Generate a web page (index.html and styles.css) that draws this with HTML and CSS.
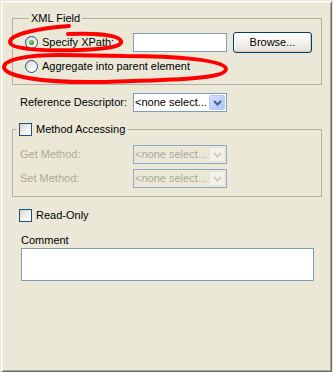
FILE: index.html
```html
<!DOCTYPE html>
<html>
<head>
<meta charset="utf-8">
<link rel="stylesheet" href="styles.css">
</head>
<body>
<div class="panel">
  <fieldset class="group xml">
    <legend>XML Field</legend>
    <div class="xrow">
      <label class="opt"><span class="radio on"></span>Specify XPath:</label>
      <span class="text"></span>
      <span class="btn">Browse...</span>
    </div>
    <div class="xrow2">
      <label class="opt"><span class="radio"></span>Aggregate into parent element</label>
    </div>
  </fieldset>
  <div class="frow ref">
    <span class="lbl">Reference Descriptor:</span>
    <span class="combo"><span class="val">&lt;none select...</span><span class="arrow"><svg width="9" height="6" viewBox="0 0 9 6"><path d="M1 1 L4.5 4.5 L8 1" fill="none" stroke="#4d6185" stroke-width="2"/></svg></span></span>
  </div>
  <fieldset class="group method">
    <legend><span class="check"></span>Method Accessing</legend>
    <div class="frow dis">
      <span class="lbl">Get Method:</span>
      <span class="combo"><span class="val">&lt;none select...</span><span class="arrow"><svg width="9" height="6" viewBox="0 0 9 6"><path d="M1 1 L4.5 4.5 L8 1" fill="none" stroke="#cfcdc2" stroke-width="2"/></svg></span></span>
    </div>
    <div class="frow dis second">
      <span class="lbl">Set Method:</span>
      <span class="combo"><span class="val">&lt;none select...</span><span class="arrow"><svg width="9" height="6" viewBox="0 0 9 6"><path d="M1 1 L4.5 4.5 L8 1" fill="none" stroke="#cfcdc2" stroke-width="2"/></svg></span></span>
    </div>
  </fieldset>
  <label class="opt ro"><span class="check"></span>Read-Only</label>
  <div class="cmt-lbl">Comment</div>
  <div class="cmt"></div>
</div>
<svg class="marks" width="333" height="100" viewBox="0 0 333 100">
  <path d="M69 26 C40 28 10 34 10 42 C10 50 50 51 80 50 C105 49 123 47 121 41 C119 35 95 33 68 34" />
  <path d="M125 56 C175 56 226 60 226 69 C226 79 170 80 100 82 C40 83 4 76 4 67 C4 60 25 55 60 55 L125 56" />
</svg>
</body>
</html>
```

FILE: styles.css
```css
html, body {
  margin: 0;
  padding: 0;
}
body {
  position: relative;
  width: 333px;
  height: 372px;
  background: #ebe8d8;
  font-family: "Liberation Sans", Arial, sans-serif;
  font-size: 11px;
  line-height: 13px;
  color: #000;
  overflow: hidden;
}
.panel {
  box-sizing: border-box;
  margin: 1px 0 0 1px;
  width: 331px;
  height: 371px;
  border: 1px solid;
  border-color: #ffffff #6f6d63 #6f6d63 #ffffff;
  box-shadow: inset 1px 1px 0 #f6f5ee, inset -1px -1px 0 #a7a596;
  padding: 10px 0 0 10px;
}
.group {
  margin: 0;
  padding: 0;
  min-width: 0;
  width: 310px;
  box-sizing: border-box;
  border: 1px solid #b3b1a3;
}
.group legend {
  height: 13px;
}
.xml {
  padding: 7px 9px 11px 12px;
}
.xml legend {
  margin-left: 4px;
  padding: 0 2px;
}
.xrow {
  display: flex;
  align-items: center;
  height: 21px;
}
.xrow .opt {
  width: 108px;
}
.xrow2 {
  margin-top: 7px;
  height: 13px;
  display: flex;
  align-items: center;
}
.opt {
  display: flex;
  align-items: center;
  height: 13px;
  white-space: nowrap;
}
.radio {
  box-sizing: border-box;
  width: 13px;
  height: 13px;
  border: 1px solid #1c5180;
  border-radius: 50%;
  background: linear-gradient(135deg, #d6d5cc 0%, #f2f1ec 55%, #ffffff 100%);
  margin-right: 4px;
  display: flex;
  align-items: center;
  justify-content: center;
  flex: none;
}
.radio.on::after {
  content: "";
  width: 5px;
  height: 5px;
  border-radius: 50%;
  background: radial-gradient(circle at 35% 35%, #7fe07f 0%, #2fa82f 60%, #1a7d1a 100%);
}
.check {
  box-sizing: border-box;
  width: 13px;
  height: 13px;
  border: 1px solid #1c5180;
  background: linear-gradient(135deg, #d6d5cc 0%, #f2f1ec 55%, #ffffff 100%);
  margin-right: 4px;
  flex: none;
}
.text {
  box-sizing: border-box;
  width: 94px;
  height: 19px;
  border: 1px solid #7f9db9;
  background: #fff;
}
.btn {
  box-sizing: border-box;
  margin-left: 6px;
  width: 79px;
  height: 21px;
  border: 1px solid #003c74;
  border-radius: 3px;
  background: linear-gradient(#ffffff 0%, #f4f3ee 50%, #e9e7df 85%, #d8d3c7 100%);
  box-shadow: inset -1px -1px 0 #d6d0c5, inset 1px 1px 0 #fff;
  display: flex;
  align-items: center;
  justify-content: center;
}
.frow {
  display: flex;
  align-items: center;
  height: 19px;
  margin-left: 8px;
}
.ref {
  margin-top: 8px;
}
.lbl {
  width: 113px;
  flex: none;
  white-space: nowrap;
}
.combo {
  box-sizing: border-box;
  width: 94px;
  height: 19px;
  border: 1px solid #7f9db9;
  background: #fff;
  display: flex;
  align-items: center;
}
.combo .val {
  flex: 1;
  padding-left: 1px;
  white-space: nowrap;
  overflow: hidden;
}
.arrow {
  box-sizing: border-box;
  flex: none;
  width: 16px;
  height: 15px;
  margin: 1px 1px 1px 0;
  border: 1px solid #b7c8f5;
  border-radius: 2px;
  background: linear-gradient(135deg, #d4e0fd 0%, #bccefa 60%, #adc2f7 100%);
  display: flex;
  align-items: center;
  justify-content: center;
}
.method {
  margin-top: 10px;
  padding: 9px 0 8px 0;
}
.method legend {
  height: 14px;
  display: flex;
  align-items: center;
  margin-left: 3px;
  padding: 0 3px;
}
.method .frow {
  margin-left: 7px;
}
.dis {
  color: #aca899;
}
.dis .combo {
  background: #ebe8d8;
  border-color: #8fa9c4;
}
.dis .arrow {
  border-color: #e6e4dc;
  background: #f3f2ec;
}
.second {
  margin-top: 5px;
}
.ro {
  margin-top: 12px;
  margin-left: 7px;
}
.cmt-lbl {
  margin-top: 12px;
  margin-left: 9px;
}
.cmt {
  box-sizing: border-box;
  margin-top: 1px;
  margin-left: 9px;
  width: 293px;
  height: 33px;
  border: 1px solid #7f9db9;
  background: #fff;
}
.marks {
  position: absolute;
  left: 0;
  top: 0;
  pointer-events: none;
}
.marks path {
  fill: none;
  stroke: #ff0000;
  stroke-width: 4;
  stroke-linecap: round;
  stroke-linejoin: round;
}
```
